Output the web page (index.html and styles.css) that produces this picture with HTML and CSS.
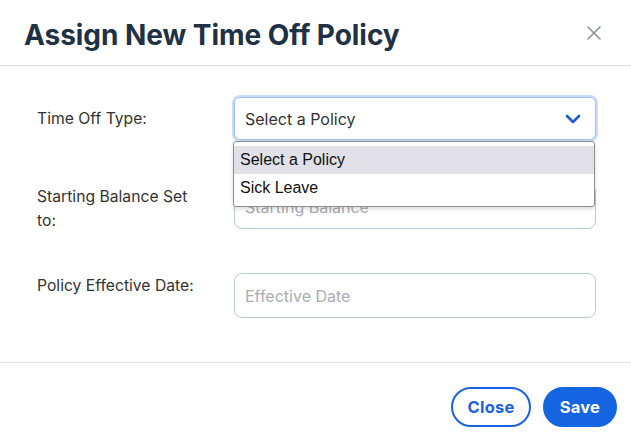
FILE: index.html
```html
<!DOCTYPE html>
<html>
<head>
<meta charset="utf-8">
<link rel="stylesheet" href="styles.css">
</head>
<body>
<div class="modal">
  <div class="modal-header">
    <h1 class="title">Assign New Time Off Policy</h1>
    <button class="close-x" aria-label="Close">
      <svg width="16" height="16" viewBox="0 0 16 16"><path d="M2 2L14 14M14 2L2 14" stroke="#8c9196" stroke-width="1.6" fill="none" stroke-linecap="round"/></svg>
    </button>
  </div>
  <div class="modal-body">
    <div class="row row-first">
      <label class="label">Time Off Type:</label>
      <div class="field">
        <div class="select">
          <span>Select a Policy</span>
          <svg class="chev" width="16" height="10" viewBox="0 0 16 10"><path d="M2 2L8 8L14 2" stroke="#1a5fd6" stroke-width="2.6" fill="none" stroke-linecap="round" stroke-linejoin="round"/></svg>
        </div>
        <ul class="menu">
          <li class="opt opt-active">Select a Policy</li>
          <li class="opt">Sick Leave</li>
        </ul>
      </div>
    </div>
    <div class="row">
      <label class="label">Starting Balance Set to:</label>
      <div class="field"><div class="input placeholder">Starting Balance</div></div>
    </div>
    <div class="row">
      <label class="label">Policy Effective Date:</label>
      <div class="field"><div class="input placeholder">Effective Date</div></div>
    </div>
  </div>
  <div class="modal-footer">
    <button class="btn btn-outline">Close</button>
    <button class="btn btn-primary">Save</button>
  </div>
</div>
</body>
</html>
```
FILE: styles.css
```css
* { box-sizing: border-box; }
body { margin: 0; background: #fff; font-family: Inter, "Noto Sans", sans-serif; }
.modal { width: 631px; height: 442px; background: #fff; }
.modal-header {
  height: 66px;
  display: flex;
  align-items: center;
  justify-content: space-between;
  padding: 0 29px 0 24px;
  border-bottom: 1px solid #d3dde3;
}
.title {
  margin: 0;
  font-size: 28px;
  font-weight: 700;
  color: #1f3144;
  letter-spacing: -0.05px;
  padding-top: 4px;
}
.close-x { border: 0; background: none; padding: 0; width: 16px; height: 16px; display: flex; margin-top: 0; }
.modal-body { padding: 31px 35px 44px 37px; display: flex; flex-direction: column; gap: 44px; border-bottom: 1px solid #dfe3e3; }
.row { display: flex; align-items: flex-start; }
.label {
  width: 197px;
  flex: none;
  font-size: 15.7px;
  line-height: 24px;
  color: #333;
  padding-right: 24px;
  padding-top: 1px;
  margin-bottom: -10px;
}
.row-first .label { padding-top: 10px; }
.field { flex: 1; position: relative; }
.select {
  height: 43px;
  border: 1px solid #9fc0ec;
  border-radius: 6px;
  box-shadow: 0 0 0 2px #c7ddf7;
  display: flex;
  align-items: center;
  justify-content: space-between;
  padding: 0 14px 0 10px;
  font-size: 16px;
  color: #333;
}
.chev { display: block; }
.input {
  height: 45px;
  border: 1px solid #b8cbd8;
  border-radius: 8px;
  display: flex;
  align-items: center;
  padding: 0 10px;
  font-size: 16px;
}
.placeholder { color: #a9adb1; }
.menu {
  position: absolute;
  left: -1px;
  right: 1px;
  top: 44px;
  margin: 0;
  padding: 4px 0;
  list-style: none;
  background: #fff;
  border: 1px solid #8f8f8f;
  border-radius: 3px;
  box-shadow: 0 2px 4px rgba(0,0,0,0.15);
  font-family: "Liberation Sans", Arial, sans-serif;
  font-size: 16px;
  color: #111;
  z-index: 2;
}
.opt { height: 28px; line-height: 28px; padding: 0 6px; }
.opt-active { background: #e1e0e6; }
.modal-footer { display: flex; justify-content: flex-end; gap: 12px; padding: 24px 14px 0 0; }
.btn {
  height: 40px;
  border-radius: 20px;
  font-family: Inter, sans-serif;
  font-size: 16.5px;
  font-weight: 700;
  padding: 0;
  letter-spacing: 0.2px;
  cursor: pointer;
}
.btn-outline { background: #fff; border: 2px solid #1a62e0; color: #1a62e0; width: 80px; }
.btn-primary { background: #1565e0; border: 2px solid #1565e0; color: #fff; width: 74px; }
```
